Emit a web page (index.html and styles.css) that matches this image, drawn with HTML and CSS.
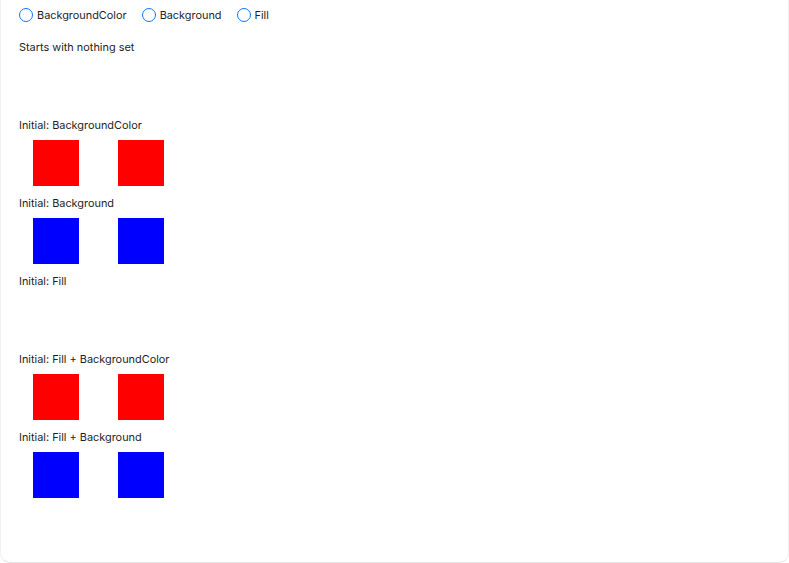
FILE: index.html
```html
<!DOCTYPE html>
<html>
<head>
<meta charset="utf-8">
<link rel="stylesheet" href="styles.css">
</head>
<body>
<div class="window">
  <div class="radios">
    <label class="radio"><span class="circle"></span><span>BackgroundColor</span></label>
    <label class="radio"><span class="circle"></span><span>Background</span></label>
    <label class="radio"><span class="circle"></span><span>Fill</span></label>
  </div>
  <div class="section">
    <div class="label">Starts with nothing set</div>
    <div class="squares"></div>
  </div>
  <div class="section">
    <div class="label">Initial: BackgroundColor</div>
    <div class="squares"><div class="sq red"></div><div class="sq red"></div></div>
  </div>
  <div class="section">
    <div class="label">Initial: Background</div>
    <div class="squares"><div class="sq blue"></div><div class="sq blue"></div></div>
  </div>
  <div class="section">
    <div class="label">Initial: Fill</div>
    <div class="squares"></div>
  </div>
  <div class="section">
    <div class="label">Initial: Fill + BackgroundColor</div>
    <div class="squares"><div class="sq red"></div><div class="sq red"></div></div>
  </div>
  <div class="section">
    <div class="label">Initial: Fill + Background</div>
    <div class="squares"><div class="sq blue"></div><div class="sq blue"></div></div>
  </div>
</div>
</body>
</html>
```
FILE: styles.css
```css
html, body {
  margin: 0;
  padding: 0;
  background: #ffffff;
}
body {
  font-family: Inter, "Liberation Sans", sans-serif;
  font-size: 10.9px;
  color: #1e1e1e;
}
.window {
  box-sizing: border-box;
  width: 789px;
  height: 563px;
  padding: 7px 0 0 18px;
  border: 1px solid #f1f1f1;
  border-bottom-color: #e4e4e4;
  border-top: none;
  border-radius: 0 0 10px 10px;
}
.radios {
  display: flex;
  align-items: center;
  gap: 15px;
  height: 16px;
}
.radio {
  display: flex;
  align-items: center;
  gap: 4px;
}
.circle {
  box-sizing: border-box;
  width: 14px;
  height: 14px;
  border: 1.6px solid #0a7aff;
  border-radius: 50%;
}
.section {
  display: flex;
  flex-direction: column;
  height: 78px;
}
.radios + .section {
  margin-top: 16px;
}
.label {
  height: 16px;
  line-height: 16px;
}
.squares {
  display: flex;
  gap: 39px;
  padding-left: 14px;
  margin-top: 7px;
}
.sq {
  width: 46px;
  height: 46px;
}
.red { background: #ff0000; }
.blue { background: #0000ff; }
```
